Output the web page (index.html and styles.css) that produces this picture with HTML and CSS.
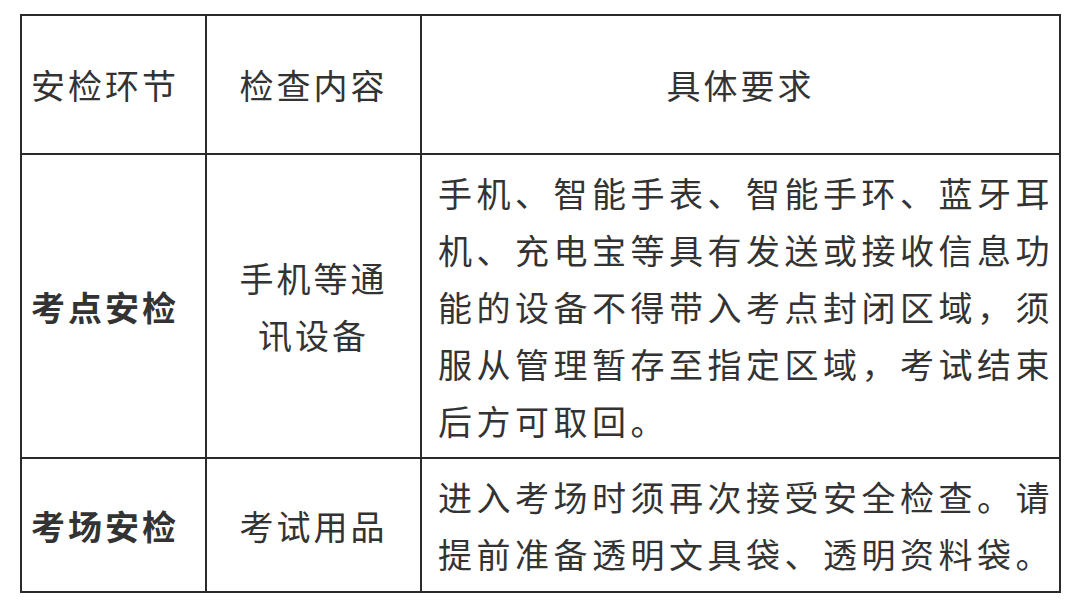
FILE: index.html
```html
<!DOCTYPE html>
<html lang="zh-CN">
<head>
<meta charset="utf-8">
<link rel="stylesheet" href="styles.css">
</head>
<body>
<table class="sheet">
  <colgroup>
    <col class="c1"><col class="c2"><col class="c3">
  </colgroup>
  <tr class="head">
    <td class="stage">安检环节</td>
    <td class="item">检查内容</td>
    <td class="req center">具体要求</td>
  </tr>
  <tr class="r2">
    <td class="stage bold">考点安检</td>
    <td class="item">手机等通<br>讯设备</td>
    <td class="req">手机、智能手表、智能手环、蓝牙耳<br>机、充电宝等具有发送或接收信息功<br>能的设备不得带入考点封闭区域，须<br>服从管理暂存至指定区域，考试结束<br>后方可取回。</td>
  </tr>
  <tr class="r3">
    <td class="stage bold">考场安检</td>
    <td class="item">考试用品</td>
    <td class="req">进入考场时须再次接受安全检查。请<br>提前准备透明文具袋、透明资料袋。</td>
  </tr>
</table>
</body>
</html>
```

FILE: styles.css
```css
html, body {
  margin: 0;
  padding: 0;
  background: #ffffff;
}
body {
  padding: 14px 0 0 20px;
  font-family: "Noto Sans CJK SC", "Noto Sans", sans-serif;
  color: #333333;
}
.sheet {
  border-collapse: collapse;
  width: 1039px;
  table-layout: fixed;
}
.c1 { width: 185px; }
.c2 { width: 215px; }
.c3 { width: 639px; }
.sheet td {
  border: 2px solid #2a2a2a;
  font-size: 34px;
  line-height: 57px;
  letter-spacing: 3px;
  vertical-align: middle;
  padding: 0;
  font-weight: 400;
}
.head { height: 139px; }
.r2 { height: 304px; }
.r3 { height: 134px; }
.stage {
  text-align: left;
  padding-left: 9px !important;
}
.bold { font-weight: 600 !important; }
.item { text-align: center; }
.req {
  text-align: left;
  letter-spacing: 4.5px !important;
  padding-left: 16px !important;
  white-space: nowrap;
  overflow: hidden;
}
.req.center {
  text-align: center;
  padding-left: 0 !important;
  letter-spacing: 3px !important;
}
```
